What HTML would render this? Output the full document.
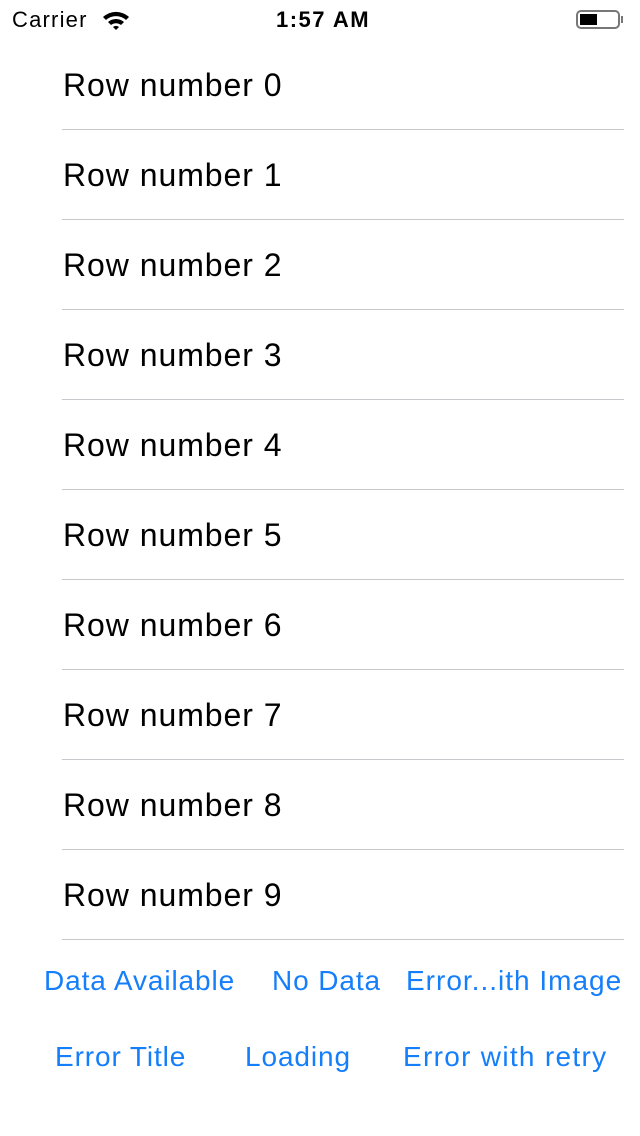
<!DOCTYPE html>
<html><head><style>
body{margin:0;width:640px;height:1136px;background:#fff;font-family:"Liberation Sans",sans-serif;position:relative;overflow:hidden}
.sb{position:absolute;top:0;left:0;width:640px;height:40px}
.row{position:absolute;left:63px;font-size:32px;letter-spacing:0.95px;color:#000;height:90px;line-height:90px}
.sep{position:absolute;left:62px;width:562px;height:1px;background:#c8c7cc}
.b{position:absolute;font-size:28px;letter-spacing:0.9px;color:#147efb;white-space:nowrap;line-height:34px}
</style></head><body>
<div class="sb">
<span style="position:absolute;left:12px;top:7px;font-size:22px;letter-spacing:1.2px">Carrier</span>
<svg style="position:absolute;left:101px;top:9px" width="30" height="22" viewBox="0 0 30 22">
<path d="M2 8 A19 19 0 0 1 28 8 L25 11 A15 15 0 0 0 5 11Z" fill="#000"/>
<path d="M7 13 A12 12 0 0 1 23 13 L20 16 A8 8 0 0 0 10 16Z" fill="#000"/>
<path d="M12 18 A5 5 0 0 1 18 18 L15 21Z" fill="#000"/>
</svg>
<span style="position:absolute;left:276px;top:7px;font-size:22px;font-weight:bold;letter-spacing:1.5px">1:57 AM</span>
<div style="position:absolute;left:576px;top:10px;width:44px;height:19px;border:2px solid #777;border-radius:5px;box-sizing:border-box"></div>
<div style="position:absolute;left:580px;top:14px;width:17px;height:11px;background:#000"></div>
<div style="position:absolute;left:621px;top:16px;width:2px;height:7px;background:#777"></div>
</div>
<div class="row" style="top:40px">Row number 0</div><div class="sep" style="top:129px"></div>
<div class="row" style="top:130px">Row number 1</div><div class="sep" style="top:219px"></div>
<div class="row" style="top:220px">Row number 2</div><div class="sep" style="top:309px"></div>
<div class="row" style="top:310px">Row number 3</div><div class="sep" style="top:399px"></div>
<div class="row" style="top:400px">Row number 4</div><div class="sep" style="top:489px"></div>
<div class="row" style="top:490px">Row number 5</div><div class="sep" style="top:579px"></div>
<div class="row" style="top:580px">Row number 6</div><div class="sep" style="top:669px"></div>
<div class="row" style="top:670px">Row number 7</div><div class="sep" style="top:759px"></div>
<div class="row" style="top:760px">Row number 8</div><div class="sep" style="top:849px"></div>
<div class="row" style="top:850px">Row number 9</div><div class="sep" style="top:939px"></div>
<div class="b" style="left:44px;top:964px">Data Available</div>
<div class="b" style="left:272px;top:964px">No Data</div>
<div class="b" style="left:406px;top:964px;letter-spacing:1px">Error...ith Image</div>
<div class="b" style="left:55px;top:1040px">Error Title</div>
<div class="b" style="left:245px;top:1040px">Loading</div>
<div class="b" style="left:403px;top:1040px;letter-spacing:1.3px">Error with retry</div>
</body></html>
